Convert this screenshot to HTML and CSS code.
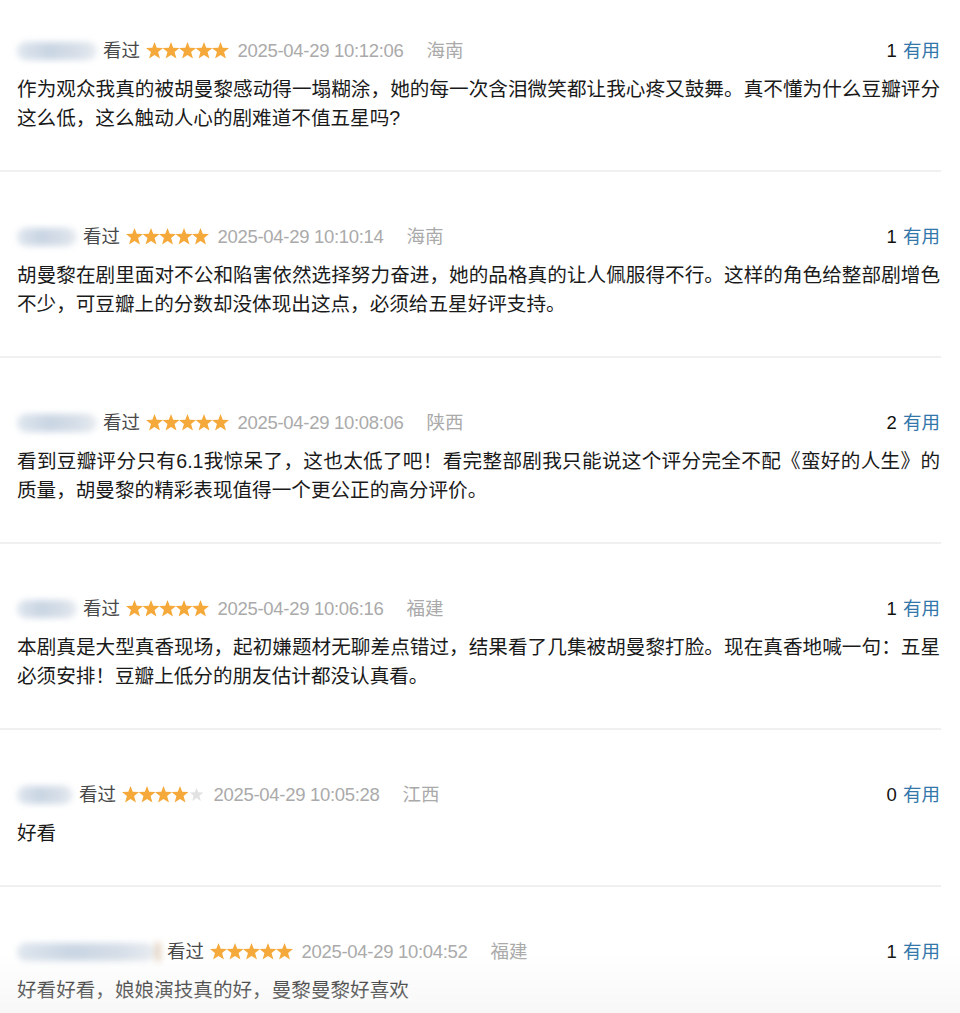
FILE: index.html
```html
<!DOCTYPE html>
<html lang="zh-CN">
<head>
    <meta charset="UTF-8">
    <meta name="viewport" content="width=device-width, initial-scale=1.0">
    <title>短评</title>
    <link rel="stylesheet" href="styles.css">
</head>
<body>
    <div class="comments">

        <div class="comment-item">
            <div class="comment-info">
                <span class="user blur-w80"></span>
                <span class="watched">看过</span>
                <span class="stars s5"><i></i><i></i><i></i><i></i><i></i></span>
                <span class="time">2025-04-29 10:12:06</span>
                <span class="location">海南</span>
                <span class="votes"><span class="vote-count">1</span> <a href="#" class="vote-link">有用</a></span>
            </div>
            <p class="comment-text">作为观众我真的被胡曼黎感动得一塌糊涂，她的每一次含泪微笑都让我心疼又鼓舞。真不懂为什么豆瓣评分这么低，这么触动人心的剧难道不值五星吗?</p>
        </div>

        <div class="comment-item">
            <div class="comment-info">
                <span class="user blur-w60"></span>
                <span class="watched">看过</span>
                <span class="stars s5"><i></i><i></i><i></i><i></i><i></i></span>
                <span class="time">2025-04-29 10:10:14</span>
                <span class="location">海南</span>
                <span class="votes"><span class="vote-count">1</span> <a href="#" class="vote-link">有用</a></span>
            </div>
            <p class="comment-text">胡曼黎在剧里面对不公和陷害依然选择努力奋进，她的品格真的让人佩服得不行。这样的角色给整部剧增色不少，可豆瓣上的分数却没体现出这点，必须给五星好评支持。</p>
        </div>

        <div class="comment-item">
            <div class="comment-info">
                <span class="user blur-w80"></span>
                <span class="watched">看过</span>
                <span class="stars s5"><i></i><i></i><i></i><i></i><i></i></span>
                <span class="time">2025-04-29 10:08:06</span>
                <span class="location">陕西</span>
                <span class="votes"><span class="vote-count">2</span> <a href="#" class="vote-link">有用</a></span>
            </div>
            <p class="comment-text">看到豆瓣评分只有6.1我惊呆了，这也太低了吧！看完整部剧我只能说这个评分完全不配《蛮好的人生》的质量，胡曼黎的精彩表现值得一个更公正的高分评价。</p>
        </div>

        <div class="comment-item">
            <div class="comment-info">
                <span class="user blur-w60"></span>
                <span class="watched">看过</span>
                <span class="stars s5"><i></i><i></i><i></i><i></i><i></i></span>
                <span class="time">2025-04-29 10:06:16</span>
                <span class="location">福建</span>
                <span class="votes"><span class="vote-count">1</span> <a href="#" class="vote-link">有用</a></span>
            </div>
            <p class="comment-text">本剧真是大型真香现场，起初嫌题材无聊差点错过，结果看了几集被胡曼黎打脸。现在真香地喊一句：五星必须安排！豆瓣上低分的朋友估计都没认真看。</p>
        </div>

        <div class="comment-item">
            <div class="comment-info">
                <span class="user blur-w55"></span>
                <span class="watched">看过</span>
                <span class="stars s4"><i></i><i></i><i></i><i></i><i class="off"></i></span>
                <span class="time">2025-04-29 10:05:28</span>
                <span class="location">江西</span>
                <span class="votes"><span class="vote-count">0</span> <a href="#" class="vote-link">有用</a></span>
            </div>
            <p class="comment-text">好看</p>
        </div>

        <div class="comment-item">
            <div class="comment-info">
                <span class="user blur-w140"><b class="cup"></b></span>
                <span class="watched">看过</span>
                <span class="stars s5"><i></i><i></i><i></i><i></i><i></i></span>
                <span class="time">2025-04-29 10:04:52</span>
                <span class="location">福建</span>
                <span class="votes"><span class="vote-count">1</span> <a href="#" class="vote-link">有用</a></span>
            </div>
            <p class="comment-text">好看好看，娘娘演技真的好，曼黎曼黎好喜欢</p>
        </div>

    </div>
    <div class="bottom-fade"></div>
</body>
</html>
```

FILE: styles.css
```css
body {
    margin: 0;
    background-color: #fff;
    font-family: "Liberation Sans", "Noto Sans CJK SC", sans-serif;
    color: #222;
}

.comments {
    width: 941px;
}

.comment-item {
    padding: 50px 1px 37px 17px;
    border-bottom: 2px solid #f0f0f0;
}

.comment-item:first-child {
    padding-top: 36px;
}

.comment-item:last-child {
    border-bottom: none;
}

.comment-info {
    display: flex;
    align-items: center;
    height: 29px;
    font-size: 18.5px;
    line-height: 29px;
}

.user {
    position: relative;
    display: inline-block;
    height: 18px;
    margin-right: 6px;
    border-radius: 9px;
    background: linear-gradient(90deg, #dfe6ee, #c9d5e3 40%, #d6dee8 75%, #e8ecf1);
    filter: blur(3px);
}

.blur-w80 { width: 80px; }
.blur-w60 { width: 60px; }
.blur-w55 { width: 56px; }
.blur-w140 { width: 138px; margin-right: 12px; }

.cup {
    position: absolute;
    right: -6px;
    top: -1px;
    width: 6px;
    height: 20px;
    border-radius: 2px 2px 4px 4px;
    background: #e6d6c4;
}

.watched {
    color: #494949;
    margin-right: 6px;
}

.stars {
    display: inline-flex;
    margin-right: 9px;
}

.stars i {
    display: block;
    width: 17px;
    height: 17px;
    margin-right: -0.5px;
    background: #f5a93a;
    clip-path: polygon(50% 0%, 63% 34%, 100% 36%, 71% 59%, 82% 97%, 50% 76%, 18% 97%, 29% 59%, 0% 36%, 37% 34%);
}

.stars i.off {
    background: #e2e2e2;
    transform: scale(0.8);
}

.time {
    color: #aaa;
    letter-spacing: -0.3px;
    margin-right: 23px;
}

.location {
    color: #aaa;
}

.votes {
    margin-left: auto;
    color: #111;
}

.vote-count {
    margin-right: 1px;
}

.vote-link {
    color: #3377aa;
    text-decoration: none;
}

.comment-text {
    margin: 10px 0 0;
    font-family: "Liberation Sans", "Noto Sans CJK SC", sans-serif;
    font-size: 19.6px;
    line-height: 29px;
    color: #1a1a1a;
    text-align: justify;
}

.bottom-fade {
    position: fixed;
    left: 0;
    right: 0;
    bottom: 0;
    height: 60px;
    background: linear-gradient(rgba(245, 245, 245, 0), rgba(240, 240, 240, 0.5));
    pointer-events: none;
}
```
